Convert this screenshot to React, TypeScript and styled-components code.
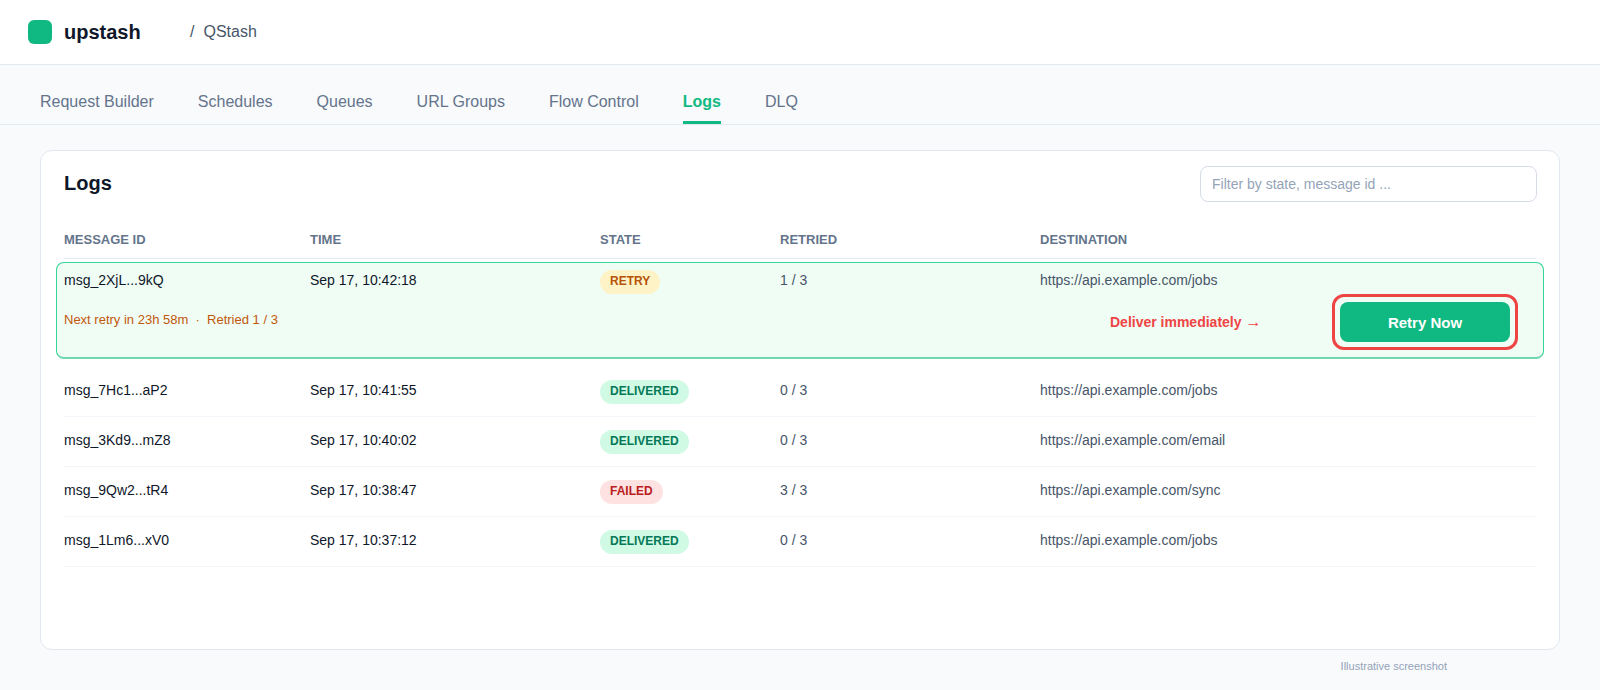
import React from "react";
import styled, { createGlobalStyle } from "styled-components";

const GlobalStyle = createGlobalStyle`
    html, body {
        margin: 0;
        padding: 0;
        background: #f8fafc;
        font-family: "Liberation Sans", Arial, sans-serif;
        color: #0f172a;
    }
    * {
        box-sizing: border-box;
    }
`;

const Page = styled.div`
    width: 1600px;
    height: 690px;
    overflow: hidden;
    background: #f8fafc;
`;

const Header = styled.header`
    height: 65px;
    background: #ffffff;
    border-bottom: 1px solid #e2e8f0;
    display: flex;
    align-items: center;
    padding-left: 28px;
`;

const LogoMark = styled.div`
    width: 24px;
    height: 24px;
    border-radius: 6px;
    background: #10b981;
    margin-right: 12px;
`;

const LogoText = styled.div`
    font-size: 20px;
    font-weight: 700;
    color: #0f172a;
    width: 126px;
`;

const Crumb = styled.div`
    font-size: 16px;
    color: #475569;
    display: flex;
    gap: 9px;
`;

const TabBar = styled.nav`
    height: 60px;
    border-bottom: 1px solid #e2e8f0;
    display: flex;
    gap: 44px;
    padding-left: 40px;
`;

const Tab = styled.div<{ $active?: boolean }>`
    height: 59px;
    padding-top: 28px;
    font-size: 16px;
    line-height: 18px;
    font-weight: ${(p) => (p.$active ? 700 : 400)};
    color: ${(p) => (p.$active ? "#10b981" : "#64748b")};
    border-bottom: 3px solid ${(p) => (p.$active ? "#10b981" : "transparent")};
`;

const Card = styled.section`
    margin: 25px 40px 0;
    height: 500px;
    background: #ffffff;
    border: 1px solid #e2e8f0;
    border-radius: 12px;
    padding: 15px 23px 0;
`;

const CardTop = styled.div`
    display: flex;
    justify-content: space-between;
    align-items: center;
    height: 36px;
`;

const Title = styled.h2`
    margin: 0 0 2px;
    font-size: 20px;
    font-weight: 700;
    color: #0f172a;
`;

const FilterInput = styled.input`
    width: 337px;
    height: 36px;
    margin-right: -1px;
    border: 1.5px solid #d5dce8;
    border-radius: 8px;
    padding: 0 11px;
    font-size: 14px;
    font-family: inherit;
    background: #ffffff;
    outline: none;
    &::placeholder {
        color: #94a3b8;
        opacity: 1;
    }
`;

const columns = "246px 290px 180px 260px 1fr";

const HeadRow = styled.div`
    display: grid;
    grid-template-columns: ${columns};
    margin-top: 21px;
    height: 36px;
    padding-top: 9px;
    border-bottom: 1px solid #e2e8f0;
    font-size: 13px;
    line-height: 15px;
    font-weight: 700;
    color: #64748b;
    text-transform: uppercase;
`;

const Row = styled.div`
    display: grid;
    grid-template-columns: ${columns};
    align-items: center;
    height: 50px;
    border-bottom: 1px solid #f1f5f9;
    font-size: 14px;
`;

const Highlight = styled.div`
    margin: 3px -8px 8px;
    height: 97px;
    background: #f0fdf4;
    border: 1px solid #34d399;
    border-bottom: 2px solid #72d6b0;
    border-radius: 8px;
    padding: 0 7px;
`;

const HighlightTop = styled.div`
    display: grid;
    grid-template-columns: ${columns};
    align-items: center;
    height: 24px;
    margin-top: 7px;
    font-size: 14px;
`;

const HighlightBottom = styled.div`
    display: flex;
    align-items: center;
    padding-right: 18px;
`;

const RetryInfo = styled.div`
    font-size: 13px;
    color: #c2570c;
    white-space: pre;
    margin-right: auto;
    margin-bottom: 6px;
`;

const Hint = styled.div`
    font-size: 14px;
    font-weight: 700;
    color: #ef4444;
    white-space: nowrap;
    width: 152px;
    margin-right: 70px;
`;

const HintArrow = styled.span`
    font-weight: 400;
    font-size: 16px;
    line-height: 14px;
`;

const CalloutRing = styled.div`
    border: 3px solid #ef4444;
    border-radius: 12px;
    padding: 5px;
`;

const RetryButton = styled.button`
    display: block;
    width: 170px;
    height: 40px;
    border: 0;
    border-radius: 8px;
    background: #10b981;
    color: #ffffff;
    font-family: inherit;
    font-size: 15px;
    font-weight: 700;
`;

const IdCell = styled.div`
    color: #0f172a;
    margin-bottom: 4px;
`;

const MutedCell = styled.div`
    color: #475569;
    margin-bottom: 4px;
`;

const pillColors = {
    RETRY: { bg: "#fef3c7", fg: "#b45309" },
    DELIVERED: { bg: "#d1fae5", fg: "#047857" },
    FAILED: { bg: "#fee2e2", fg: "#b91c1c" },
};

type State = keyof typeof pillColors;

const Pill = styled.span<{ $state: State }>`
    justify-self: start;
    height: 24px;
    line-height: 22px;
    padding: 0 10px;
    border-radius: 12px;
    font-size: 12px;
    font-weight: 700;
    background: ${(p) => pillColors[p.$state].bg};
    color: ${(p) => pillColors[p.$state].fg};
`;

const Caption = styled.div`
    width: 1447px;
    margin-top: 10px;
    text-align: right;
    font-size: 11px;
    line-height: 13px;
    color: #94a3b8;
`;

const tabs = ["Request Builder", "Schedules", "Queues", "URL Groups", "Flow Control", "Logs", "DLQ"];

const rows: { id: string; time: string; state: State; retried: string; url: string }[] = [
    { id: "msg_7Hc1...aP2", time: "Sep 17, 10:41:55", state: "DELIVERED", retried: "0 / 3", url: "https://api.example.com/jobs" },
    { id: "msg_3Kd9...mZ8", time: "Sep 17, 10:40:02", state: "DELIVERED", retried: "0 / 3", url: "https://api.example.com/email" },
    { id: "msg_9Qw2...tR4", time: "Sep 17, 10:38:47", state: "FAILED", retried: "3 / 3", url: "https://api.example.com/sync" },
    { id: "msg_1Lm6...xV0", time: "Sep 17, 10:37:12", state: "DELIVERED", retried: "0 / 3", url: "https://api.example.com/jobs" },
];

export default function App() {
    return (
        <Page>
            <GlobalStyle />
            <Header>
                <LogoMark />
                <LogoText>upstash</LogoText>
                <Crumb>
                    <span>/</span>
                    <span>QStash</span>
                </Crumb>
            </Header>
            <TabBar>
                {tabs.map((t) => (
                    <Tab key={t} $active={t === "Logs"}>
                        {t}
                    </Tab>
                ))}
            </TabBar>
            <Card>
                <CardTop>
                    <Title>Logs</Title>
                    <FilterInput placeholder="Filter by state, message id ..." />
                </CardTop>
                <HeadRow>
                    <div>Message ID</div>
                    <div>Time</div>
                    <div>State</div>
                    <div>Retried</div>
                    <div>Destination</div>
                </HeadRow>
                <Highlight>
                    <HighlightTop>
                        <IdCell>msg_2XjL...9kQ</IdCell>
                        <IdCell>Sep 17, 10:42:18</IdCell>
                        <Pill $state="RETRY">RETRY</Pill>
                        <MutedCell>1 / 3</MutedCell>
                        <MutedCell>https://api.example.com/jobs</MutedCell>
                    </HighlightTop>
                    <HighlightBottom>
                        <RetryInfo>{"Next retry in 23h 58m  ·  Retried 1 / 3"}</RetryInfo>
                        <Hint>
                            Deliver immediately <HintArrow>→</HintArrow>
                        </Hint>
                        <CalloutRing>
                            <RetryButton>Retry Now</RetryButton>
                        </CalloutRing>
                    </HighlightBottom>
                </Highlight>
                {rows.map((r) => (
                    <Row key={r.id}>
                        <IdCell>{r.id}</IdCell>
                        <IdCell>{r.time}</IdCell>
                        <Pill $state={r.state}>{r.state}</Pill>
                        <MutedCell>{r.retried}</MutedCell>
                        <MutedCell>{r.url}</MutedCell>
                    </Row>
                ))}
            </Card>
            <Caption>Illustrative screenshot</Caption>
        </Page>
    );
}
